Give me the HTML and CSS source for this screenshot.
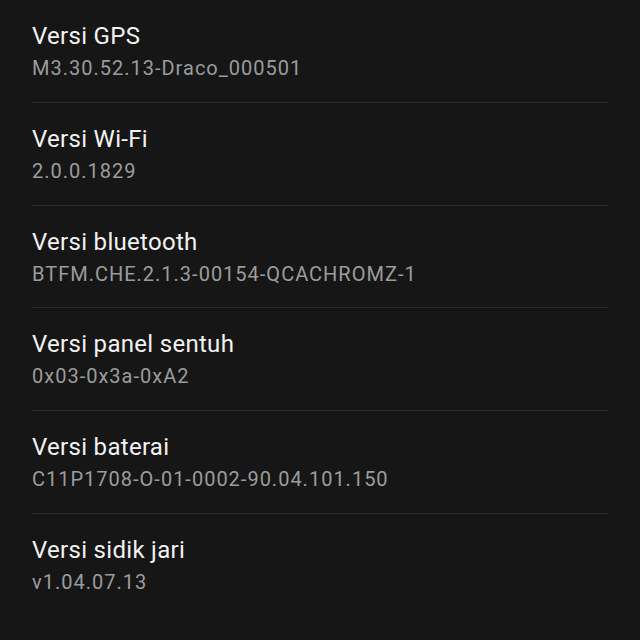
FILE: index.html
```html
<!DOCTYPE html>
<html lang="id">
<head>
  <meta charset="UTF-8" />
  <meta name="viewport" content="width=device-width, initial-scale=1" />
  <title>Informasi perangkat lunak</title>
  <link rel="stylesheet" href="styles.css">
</head>
<body>

  <ul class="list">
    <li class="item">
      <div class="title">Versi GPS</div>
      <div class="summary">M3.30.52.13-Draco_000501</div>
    </li>
    <li class="item">
      <div class="title">Versi Wi-Fi</div>
      <div class="summary">2.0.0.1829</div>
    </li>
    <li class="item">
      <div class="title">Versi bluetooth</div>
      <div class="summary">BTFM.CHE.2.1.3-00154-QCACHROMZ-1</div>
    </li>
    <li class="item">
      <div class="title">Versi panel sentuh</div>
      <div class="summary">0x03-0x3a-0xA2</div>
    </li>
    <li class="item">
      <div class="title">Versi baterai</div>
      <div class="summary">C11P1708-O-01-0002-90.04.101.150</div>
    </li>
    <li class="item">
      <div class="title">Versi sidik jari</div>
      <div class="summary">v1.04.07.13</div>
    </li>
  </ul>

</body>
</html>
```

FILE: styles.css
```css
body {
  margin: 0;
  background: #161616;
  font-family: Roboto, "Noto Sans", sans-serif;
}
.list {
  list-style: none;
  margin: 0;
  padding: 0 32px;
}
.item {
  padding: 22px 0 21.8px;
  border-bottom: 1px solid #2b2b2b;
}
.item:last-child { border-bottom: none; }
.title {
  color: #f2f2f2;
  font-size: 24px;
  line-height: 28px;
  letter-spacing: 0.3px;
}
.summary {
  color: #9c9c9c;
  font-size: 20px;
  line-height: 24px;
  letter-spacing: 1px;
  margin-top: 6px;
}
```
